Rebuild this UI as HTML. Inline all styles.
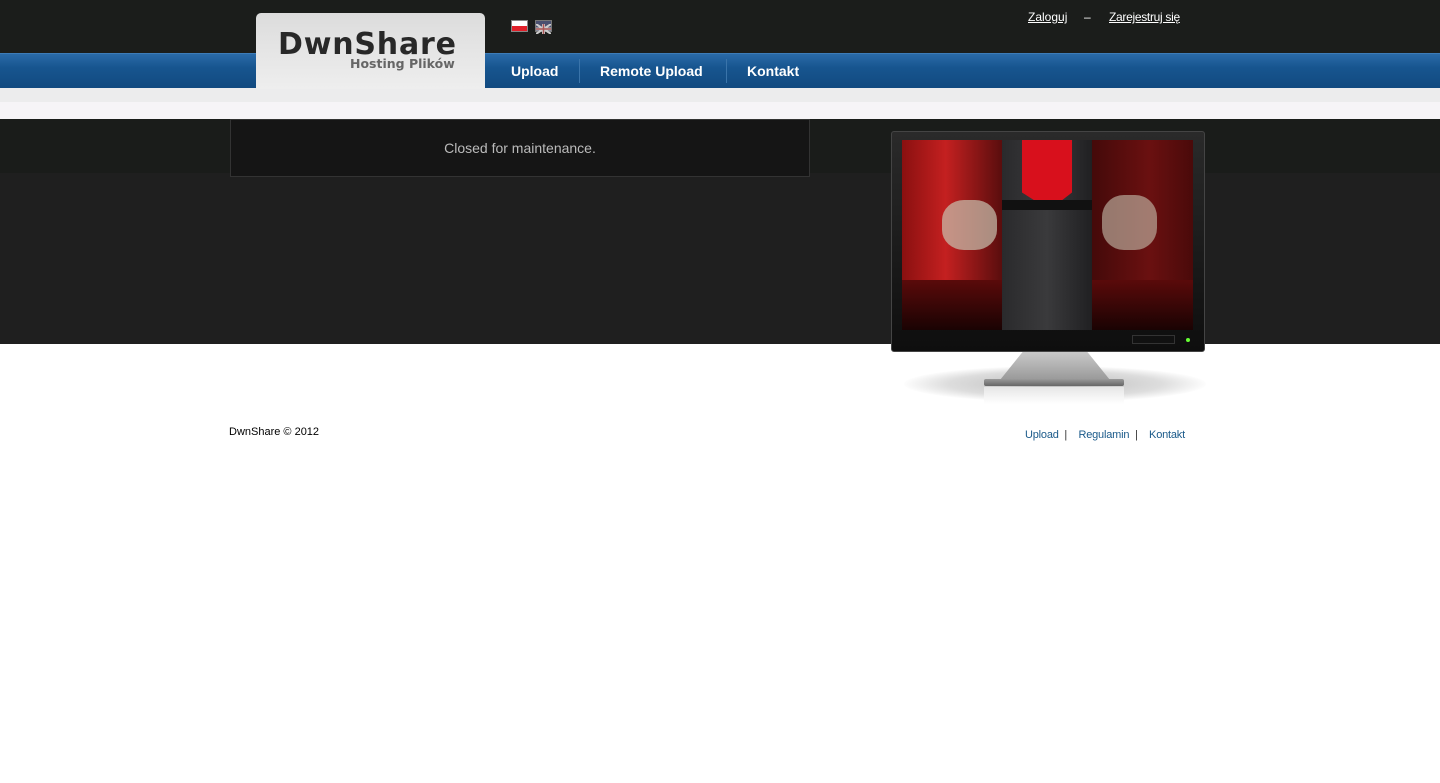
<!DOCTYPE html>
<html><head><meta charset="utf-8"><style>
*{margin:0;padding:0;box-sizing:border-box}
body{width:1440px;height:783px;background:#fff;font-family:"Liberation Sans",Arial,sans-serif;position:relative;overflow:hidden}
.abs{position:absolute}
</style></head><body>
<div class="abs" style="left:0;top:0;width:1440px;height:53px;background:#1b1d1b"></div>
<div class="abs" style="left:0;top:53px;width:1440px;height:35px;background:linear-gradient(#2a6aa8,#17558f 40%,#124a80);border-top:1px solid #3d7cb8"></div>
<div class="abs" style="left:0;top:88px;width:1440px;height:14px;background:#ececed"></div>
<div class="abs" style="left:0;top:102px;width:1440px;height:17px;background:#f6f4f7"></div>
<div class="abs" style="left:0;top:119px;width:1440px;height:54px;background:#1a1c1a"></div>
<div class="abs" style="left:0;top:173px;width:1440px;height:171px;background:#1f1f1f"></div>

<div class="abs" style="left:256px;top:13px;width:229px;height:76px;background:linear-gradient(#dcdcdc,#eeeeee);border-radius:5px 5px 0 0"></div>
<div class="abs" style="left:278px;top:27px;font-family:'DejaVu Sans',sans-serif;font-weight:bold;font-size:30px;color:#282828;letter-spacing:0.8px">DwnShare</div>
<div class="abs" style="left:350px;top:56px;font-family:'DejaVu Sans',sans-serif;font-weight:bold;font-size:12.5px;color:#666">Hosting Plików</div>

<div class="abs" style="left:511px;top:20px;width:17px;height:12px;background:linear-gradient(#fff 50%,#e0202a 50%);border:1px solid #888"></div>
<div class="abs" style="left:535px;top:20px;width:17px;height:12px;background:#4a5070;border:1px solid #777"><svg width="15" height="10"><path d="M0 0L15 10M15 0L0 10" stroke="#ccc" stroke-width="2"/><path d="M7.5 0V10M0 5H15" stroke="#ccc" stroke-width="3"/><path d="M7.5 0V10M0 5H15" stroke="#a55" stroke-width="1.5"/></svg></div>

<div class="abs" style="left:1028px;top:10px;font-size:12px;color:#fff;text-decoration:underline">Zaloguj</div>
<div class="abs" style="left:1084px;top:10px;font-size:12px;color:#fff">–</div>
<div class="abs" style="left:1109px;top:10px;font-size:12px;color:#fff;text-decoration:underline;letter-spacing:-0.3px">Zarejestruj się</div>

<div class="abs" style="left:511px;top:63px;font-size:14px;font-weight:bold;color:#fff">Upload</div>
<div class="abs" style="left:579px;top:59px;width:1px;height:24px;background:#3a74aa"></div>
<div class="abs" style="left:600px;top:63px;font-size:14px;font-weight:bold;color:#fff">Remote Upload</div>
<div class="abs" style="left:726px;top:59px;width:1px;height:24px;background:#3a74aa"></div>
<div class="abs" style="left:747px;top:63px;font-size:14px;font-weight:bold;color:#fff">Kontakt</div>

<div class="abs" style="left:230px;top:119px;width:580px;height:58px;background:#151515;border:1px solid #333"></div>
<div class="abs" style="left:230px;top:140px;width:580px;text-align:center;font-size:14px;color:#bbb">Closed for maintenance.</div>

<!-- monitor -->
<div class="abs" style="left:904px;top:366px;width:302px;height:36px;border-radius:50%;background:radial-gradient(ellipse,#bbb 0%,#ddd 50%,rgba(255,255,255,0) 72%)"></div>
<div class="abs" style="left:1000px;top:350px;width:110px;height:30px;background:linear-gradient(#ccc,#999);clip-path:polygon(22% 0,78% 0,100% 100%,0 100%)"></div>
<div class="abs" style="left:984px;top:379px;width:140px;height:7px;background:linear-gradient(#999,#666);border-radius:2px"></div>
<div class="abs" style="left:984px;top:387px;width:140px;height:17px;background:linear-gradient(#e6e6e6,#fff)"></div>
<div class="abs" style="left:891px;top:131px;width:314px;height:221px;background:linear-gradient(#2a2a2a,#0e0e0e);border:1px solid #444;border-radius:3px"></div>
<div class="abs" style="left:902px;top:140px;width:291px;height:190px;overflow:hidden;background:linear-gradient(90deg,#8a1010,#c42020 15%,#3a0808 40%,#3a0808 60%,#6a1010 85%,#4a0a0a)">
 <div class="abs" style="left:0;top:140px;width:291px;height:50px;background:linear-gradient(#5a0a0a,#1a0303)"></div>
 <div class="abs" style="left:100px;top:0;width:90px;height:190px;background:linear-gradient(90deg,#2a2a2c,#3a3a3c 50%,#202022)"></div>
 <div class="abs" style="left:120px;top:0;width:50px;height:70px;background:#d8101c;clip-path:polygon(0 0,100% 0,100% 75%,55% 100%,0 75%)"></div>
 <div class="abs" style="left:40px;top:60px;width:55px;height:50px;background:#c8c3b0;opacity:.7;border-radius:40%"></div>
 <div class="abs" style="left:200px;top:55px;width:55px;height:55px;background:#c8c3b0;opacity:.6;border-radius:40%"></div>
 <div class="abs" style="left:100px;top:60px;width:90px;height:10px;background:#111"></div>
</div>
<div class="abs" style="left:1132px;top:335px;width:43px;height:9px;background:#111;border:1px solid #333"></div>
<div class="abs" style="left:1186px;top:338px;width:4px;height:4px;background:#6f3;border-radius:50%"></div>

<div class="abs" style="left:229px;top:426px;font-size:11px;color:#000">DwnShare © 2012</div>
<div class="abs" style="left:1025px;top:429px;font-size:11px;color:#1a5a8a;letter-spacing:-0.2px">Upload <span style="color:#333">&nbsp;|&nbsp;&nbsp;&nbsp;</span> Regulamin <span style="color:#333">&nbsp;|&nbsp;&nbsp;&nbsp;</span> Kontakt</div>
</body></html>
